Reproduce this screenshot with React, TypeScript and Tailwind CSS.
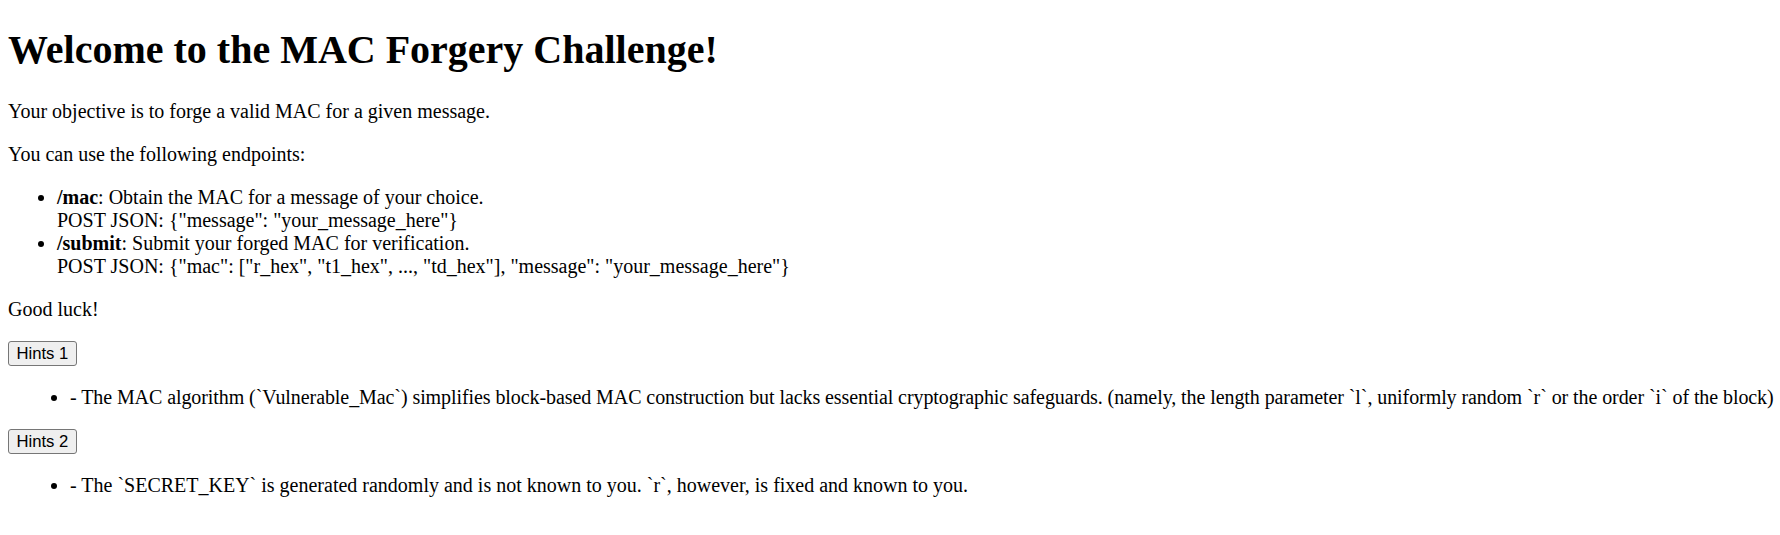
import React, { FC } from 'react';

const serif = "font-['Liberation_Serif','Times_New_Roman',serif]";

const HintButton: FC<{ label: string }> = ({ label }) => (
    <button
        type="button"
        className="block font-['Liberation_Sans',Arial,sans-serif] text-[16.67px] leading-[19px] text-black bg-[#efefef] border border-[#767676] rounded-[3px] px-[7.5px] py-[2px]"
    >
        {label}
    </button>
);

const Hint: FC<{ children: React.ReactNode; tight?: boolean }> = ({ children, tight = false }) => (
    <ul className={`list-disc pl-[62px] my-[20px] whitespace-nowrap ${tight ? 'tracking-[-0.08px]' : ''}`}>
        <li>{children}</li>
    </ul>
);

export default function App() {
    return (
        <div className={`${serif} text-[20px] leading-[23px] text-black bg-white min-h-[535px] px-[8px] pt-[0.1px]`}>
            <h1 className="text-[40px] leading-[46px] font-bold mt-[26.8px] mb-[26.8px]">
                Welcome to the MAC Forgery Challenge!
            </h1>

            <p className="my-[20px]">Your objective is to forge a valid MAC for a given message.</p>
            <p className="my-[20px]">You can use the following endpoints:</p>

            <ul className="list-disc pl-[49px] my-[20px]">
                <li>
                    <strong>/mac</strong>: Obtain the MAC for a message of your choice.
                    <br />
                    POST JSON: {'{"message": "your_message_here"}'}
                </li>
                <li>
                    <strong>/submit</strong>: Submit your forged MAC for verification.
                    <br />
                    POST JSON: {'{"mac": ["r_hex", "t1_hex", ..., "td_hex"], "message": "your_message_here"}'}
                </li>
            </ul>

            <p className="mt-[20px] mb-[20px]">Good luck!</p>

            <HintButton label="Hints 1" />
            <Hint tight>
                - The MAC algorithm (`Vulnerable_Mac`) simplifies block-based MAC construction but lacks essential cryptographic safeguards. (namely, the length parameter `l`, uniformly random `r` or the order `i` of the block)
            </Hint>

            <HintButton label="Hints 2" />
            <Hint>
                - The `SECRET_KEY` is generated randomly and is not known to you. `r`, however, is fixed and known to you.
            </Hint>
        </div>
    );
}
